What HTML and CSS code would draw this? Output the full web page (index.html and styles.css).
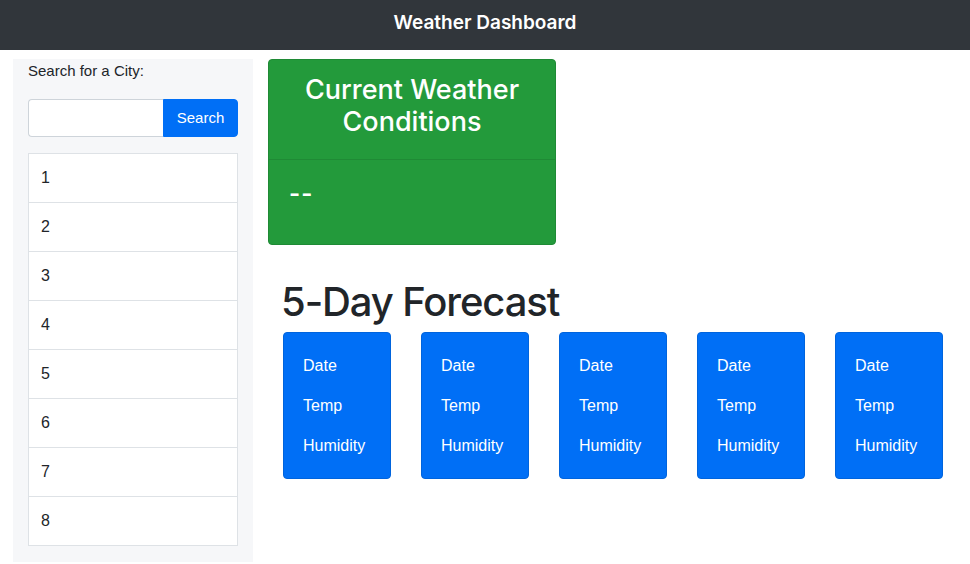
FILE: index.html
```html
<!DOCTYPE html>
<html lang="en">
<head>
<meta charset="utf-8">
<title>Weather Dashboard</title>
<link rel="stylesheet" href="styles.css">
</head>
<body>
<header class="navbar">Weather Dashboard</header>
<main class="layout">
  <aside class="sidebar">
    <label class="search-label" for="city">Search for a City:</label>
    <div class="input-group">
      <input id="city" class="city-input" type="text">
      <button class="search-btn">Search</button>
    </div>
    <ul class="history">
      <li>1</li>
      <li>2</li>
      <li>3</li>
      <li>4</li>
      <li>5</li>
      <li>6</li>
      <li>7</li>
      <li>8</li>
    </ul>
  </aside>
  <section class="content">
    <div class="current">
      <div class="current-header">Current Weather Conditions</div>
      <div class="current-body">--</div>
    </div>
    <div class="forecast">
      <h1 class="forecast-title">5-Day Forecast</h1>
      <div class="forecast-cards">
        <div class="day-card"><p>Date</p><p>Temp</p><p>Humidity</p></div>
        <div class="day-card"><p>Date</p><p>Temp</p><p>Humidity</p></div>
        <div class="day-card"><p>Date</p><p>Temp</p><p>Humidity</p></div>
        <div class="day-card"><p>Date</p><p>Temp</p><p>Humidity</p></div>
        <div class="day-card"><p>Date</p><p>Temp</p><p>Humidity</p></div>
      </div>
    </div>
  </section>
</main>
</body>
</html>
```

FILE: styles.css
```css
* { box-sizing: border-box; }
body {
  margin: 0;
  font-family: "Liberation Sans", Arial, sans-serif;
  font-size: 16px;
  line-height: 24px;
  color: #212529;
  background: #fff;
}
.navbar {
  height: 50px;
  background: #31363b;
  color: #fff;
  font-family: Inter, "Liberation Sans", sans-serif;
  font-weight: 600;
  font-size: 19px;
  display: flex;
  align-items: center;
  justify-content: center;
  padding-bottom: 4px;
}
.layout {
  display: flex;
  align-items: flex-start;
  padding: 9px 0 0 13px;
  gap: 15px;
}
.sidebar {
  width: 240px;
  background: #f6f7f9;
  padding: 0 15px 16px;
  display: flex;
  flex-direction: column;
}
.search-label {
  font-size: 15px;
  line-height: 24px;
  margin-bottom: 16px;
}
.input-group {
  display: flex;
  height: 38px;
  margin-bottom: 16px;
}
.city-input {
  width: 135px;
  border: 1px solid #ced4da;
  border-right: none;
  border-radius: 4px 0 0 4px;
  background: #fff;
  font: inherit;
  padding: 6px 12px;
}
.search-btn {
  width: 75px;
  border: 1px solid #006ff6;
  border-radius: 0 4px 4px 0;
  background: #006ff6;
  color: #fff;
  font: inherit;
  font-size: 15px;
  padding: 0;
}
.history {
  list-style: none;
  margin: 0;
  padding: 0;
  border: 1px solid #dee2e6;
  background: #fff;
}
.history li {
  padding: 12px 12px;
  border-top: 1px solid #dee2e6;
  height: 49px;
}
.history li:first-child {
  border-top: none;
  height: 48px;
}
.content {
  display: flex;
  flex-direction: column;
}
.current {
  width: 288px;
  background: #239a3b;
  border: 1px solid #1f8a35;
  border-radius: 4px;
  color: #fff;
}
.current-header {
  font-family: Inter, "Liberation Sans", sans-serif;
  font-weight: 500;
  font-size: 27px;
  line-height: 32px;
  text-align: center;
  padding: 14px 20px 21px;
  border-bottom: 1px solid #1f8a35;
}
.current-body {
  font-family: Inter, "Liberation Sans", sans-serif;
  font-weight: 600;
  font-size: 24px;
  line-height: 29px;
  letter-spacing: 1px;
  padding: 19px 19px 36px 20px;
}
.forecast {
  padding: 33px 0 0 15px;
}
.forecast-title {
  margin: 0 0 6px -2px;
  font-family: Inter, "Liberation Sans", sans-serif;
  font-size: 40px;
  line-height: 48px;
  font-weight: 500;
  letter-spacing: -1.1px;
}
.forecast-cards {
  display: flex;
  gap: 30px;
}
.day-card {
  width: 108px;
  background: #006ff6;
  border: 1px solid #0064dd;
  border-radius: 4px;
  color: #fff;
  padding: 21px 19px 20px;
}
.day-card p {
  margin: 0 0 16px;
}
.day-card p:last-child {
  margin-bottom: 0;
}
```
